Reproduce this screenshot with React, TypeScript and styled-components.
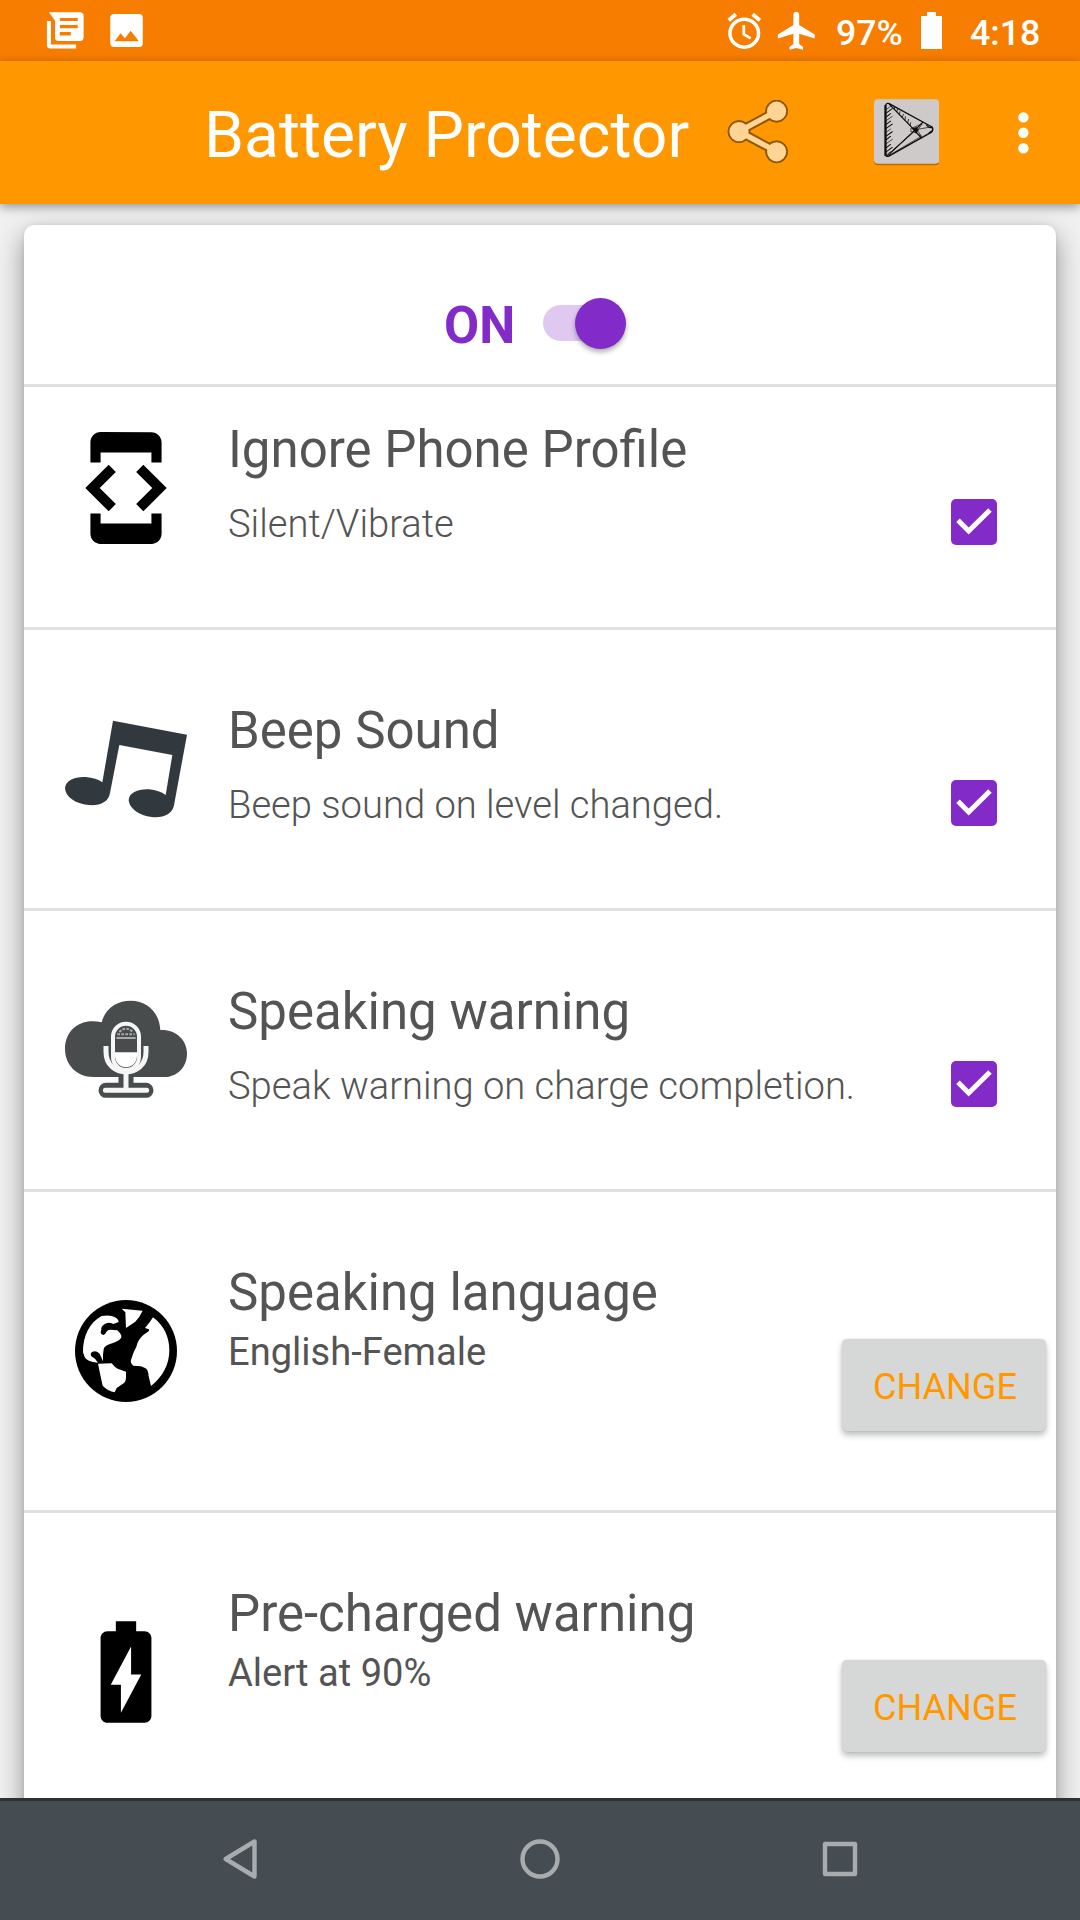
import React from "react";
import styled, { createGlobalStyle } from "styled-components";

const ORANGE = "#ff9800";
const PURPLE = "#832bc8";

const GlobalStyle = createGlobalStyle`
  *, *::before, *::after { box-sizing: border-box; }
  body { margin: 0; background: #eeeeee; }
`;

const Screen = styled.div`
  width: 1080px;
  height: 1920px;
  display: flex;
  flex-direction: column;
  overflow: hidden;
  background: #f0f0f0;
  color: #545454;
  font-family: Roboto, "Liberation Sans", sans-serif;
  svg { display: block; flex: none; }
`;

const StatusBar = styled.header`
  height: 61px;
  flex: none;
  display: flex;
  align-items: center;
  padding: 0 40px 0 44px;
  background: #f77d00;
  color: #fff;
  font-size: 35.7px;
  font-weight: 500;
  line-height: 61px;
`;

const StatusGroup = styled.div<{ $end?: boolean }>`
  display: flex;
  align-items: center;
  height: 61px;
  margin-left: ${(p) => (p.$end ? "auto" : "0")};
`;

const StatusText = styled.span<{ $width: number; $left: number }>`
  width: ${(p) => p.$width}px;
  margin-left: ${(p) => p.$left}px;
  padding-top: 6px;
  white-space: nowrap;
`;

const AppBar = styled.div`
  height: 143px;
  flex: none;
  display: flex;
  align-items: center;
  padding-left: 204px;
  background: ${ORANGE};
  box-shadow: 0 3px 10px rgba(0, 0, 0, 0.38);
  z-index: 2;
`;

const AppTitle = styled.h1`
  margin: 0;
  width: 520px;
  color: #fff;
  font-size: 64.2px;
  font-weight: 400;
  line-height: 75px;
  padding-top: 6px;
  white-space: nowrap;
`;

const BarAction = styled.div<{ $width: number }>`
  width: ${(p) => p.$width}px;
  display: flex;
`;

const Body = styled.main`
  flex: 1;
  min-height: 0;
  padding: 21px 24px 0;
  overflow: hidden;
`;

const Card = styled.section`
  height: 1600px;
  display: flex;
  flex-direction: column;
  background: #fff;
  border-radius: 10px;
  box-shadow: 0 10px 26px rgba(0, 0, 0, 0.4), 0 0 4px rgba(0, 0, 0, 0.08);
`;

const MasterToggle = styled.div`
  height: 162px;
  flex: none;
  display: flex;
  align-items: flex-start;
  padding: 69px 0 0 420px;
  border-bottom: 3px solid #e0e0e0;
`;

const ToggleLabel = styled.span`
  width: 99px;
  color: ${PURPLE};
  font-size: 51px;
  font-weight: 700;
  line-height: 62px;
  padding-top: 1px;
`;

const SwitchTrack = styled.span`
  width: 78px;
  height: 36px;
  margin-top: 11px;
  display: flex;
  align-items: center;
  justify-content: flex-end;
  border-radius: 18px;
  background: #dfc9f1;
`;

const SwitchThumb = styled.span`
  width: 51px;
  height: 51px;
  flex: none;
  margin-right: -5px;
  border-radius: 50%;
  background: ${PURPLE};
  box-shadow: 0 3px 5px rgba(0, 0, 0, 0.32);
`;

const SettingsList = styled.div`
  flex: 1;
  min-height: 0;
  overflow: hidden;
`;

const SettingRow = styled.div<{ $tall?: boolean; $scrolled?: boolean }>`
  height: ${(p) => (p.$tall ? 321 : 281)}px;
  margin-top: ${(p) => (p.$scrolled ? -38 : 0)}px;
  display: flex;
  align-items: flex-start;
  border-bottom: 3px solid #e0e0e0;
`;

const IconSlot = styled.div`
  width: 204px;
  height: 100%;
  flex: none;
  display: flex;
  align-items: center;
  justify-content: center;
`;

const RowText = styled.div`
  flex: 1;
  padding-top: 71px;
  white-space: nowrap;
`;

const RowTitle = styled.h2`
  margin: 0;
  font-size: 51px;
  font-weight: 400;
  line-height: 60px;
`;

const Description = styled.p`
  margin: 22px 0 0;
  font-size: 38.15px;
  font-weight: 300;
  line-height: 45px;
`;

const CurrentValue = styled.p`
  margin: 7px 0 0;
  font-size: 38.1px;
  line-height: 45px;
`;

const CheckBox = styled.span`
  width: 46px;
  height: 46px;
  flex: none;
  margin: 150px 59px 0 0;
  border-radius: 5px;
  background: ${PURPLE};
`;

const ChangeButton = styled.button`
  width: 204px;
  height: 92px;
  flex: none;
  margin: 147px 10px 0 0;
  padding: 5px 0 0 2px;
  border: 0;
  border-radius: 5px;
  background: #d6d8d7;
  color: ${ORANGE};
  font: 400 36.1px/87px Roboto, "Liberation Sans", sans-serif;
  box-shadow: 0 4px 6px rgba(0, 0, 0, 0.26), 0 0 2px rgba(0, 0, 0, 0.12);
`;

const NavBar = styled.nav`
  height: 122px;
  flex: none;
  display: flex;
  align-items: center;
  justify-content: center;
  gap: 252px;
  padding-bottom: 3px;
  border-top: 3px solid #2b3233;
  background: #454d52;
  z-index: 3;
`;

const NavIcon = ({ children }: { children: React.ReactNode }) => (
  <svg width="48" height="48" viewBox="0 0 48 48" fill="none" stroke="#a8acae" strokeWidth="4.4" strokeLinejoin="round">
    {children}
  </svg>
);

const LibraryIcon = () => (
  <svg width="44" height="43" viewBox="0 0 44 44" fill="#fff" preserveAspectRatio="none">
    <path
      fillRule="evenodd"
      d="M5 3.2h31q3.6 0 3.6 3.6v22.4q0 3.6-3.6 3.6H14.6q-3.6 0-3.6-3.6V12zM15.8 9.1v3.3h18V9.1zm0 7.3v3.3h18v-3.3zm0 7.2v3.5h11v-3.5z"
    />
    <path d="M2.9 12.4h4v24h25.2v4H6.5q-3.6 0-3.6-3.6z" />
  </svg>
);

const PhotoSvg = styled.svg`
  margin-left: 22px;
`;

const ImageIcon = () => (
  <PhotoSvg width="33.5" height="33" viewBox="0 0 34 34" fill="#fff">
    <path fillRule="evenodd" d="M4 0h26q3.5 0 3.5 3.8v26.4q0 3.8-3.5 3.8H4q-4 0-4-3.8V3.8Q0 0 4 0zM4.5 28.2H29.5L21 17.2l-5.8 7.7-4.6-5z" />
  </PhotoSvg>
);

const AlarmIcon = () => (
  <svg width="34.5" height="37.6" viewBox="0 0 36 40" fill="none" stroke="#fff" preserveAspectRatio="none">
    <circle cx="18" cy="22.5" r="14.9" strokeWidth="3.7" />
    <path d="M1.8 8.8 9.2 2.4M34.2 8.8 26.8 2.4" strokeWidth="4" />
    <path d="M17.5 14v9.7l7.2 4.4" strokeWidth="2.9" />
  </svg>
);

const PlaneSvg = styled.svg`
  margin-left: 12.5px;
`;

const PlaneIcon = () => (
  <PlaneSvg width="46.5" height="45.6" viewBox="0 0 24 24" fill="#fff" preserveAspectRatio="none">
    <path d="M21 16v-2l-8-5V3.5c0-.83-.67-1.5-1.5-1.5S10 2.67 10 3.5V9l-8 5v2l8-2.5V19l-2 1.5V22l3.5-1 3.5 1v-1.5L13 19v-5.5l8 2.5z" />
  </PlaneSvg>
);

const BatteryIcon = () => (
  <svg width="21" height="37" viewBox="0 0 21 37" fill="#fff">
    <path d="M6 0h9v4h6v33H0V4h6z" />
  </svg>
);

const ShareIcon = () => (
  <svg width="64" height="66" viewBox="0 0 64 66">
    <g fill="#8f5602" stroke="#8f5602">
      <path d="M52.6 11.2 15 31.4l37.6 20.2" fill="none" strokeWidth="9.4" />
      <circle cx="52.6" cy="11.2" r="11" />
      <circle cx="15" cy="31.6" r="11" />
      <circle cx="52.6" cy="51.8" r="11" />
    </g>
    <g fill="#ffd495">
      <path d="M52.6 11.2 15 31.4l37.6 20.2" fill="none" stroke="#ffd495" strokeWidth="5.4" />
      <circle cx="52.6" cy="11.2" r="9.6" />
      <circle cx="15" cy="31.6" r="9.6" />
      <circle cx="52.6" cy="51.8" r="9.6" />
    </g>
  </svg>
);

const hatch = [22, 32, 44, 55, 66, 78, 90, 101, 112, 124, 136, 148, 158];

const SketchPlayIcon = () => (
  <svg width="65.5" height="67.5" viewBox="0 0 190 202" preserveAspectRatio="none">
    <rect x="0" y="5" width="190" height="193" rx="12" fill="#b56c08" />
    <rect x="0" y="1" width="190" height="193" rx="12" fill="#cecac9" />
    <g fill="none" stroke="#0d0d0d" strokeLinecap="round" strokeLinejoin="round">
      <path d="M34 20v146q1 8 9 5l124-72q7-8 0-16L44 14q-8-4-10 6z" strokeWidth="4" />
      <path d="M33 20v148" strokeWidth="6" />
      <path d="M45 16 118 94l19 22M38 171 118 94l23-24" strokeWidth="3.5" />
      <path d="M48 160 106 106M45 168l91-56M56 152l56-50" strokeWidth="1.8" />
      <path d="M108 88l32-14-14 20 12 18-18-12-12-2zM120 92l48-9" strokeWidth="2" />
      <path d="M112 88l12-3 4 10-7 6z" fill="#0d0d0d" strokeWidth="2" />
      <path d="M152 78q8 10 18 8M160 101l10-7" strokeWidth="3" />
      {hatch.map((y, i) => (
        <path key={y} d={`M35 ${y + 10}l${i % 2 ? 18 : 13}-${i % 2 ? 13 : 10}`} strokeWidth={i % 3 ? 3 : 2} />
      ))}
      <path d="M66 38l2-7M74 47l1-9M82 55l3-9M90 63l1-10M98 71l2-10M105 79l1-8M60 31l-1-6" strokeWidth="2.4" />
    </g>
  </svg>
);

const MoreIcon = () => (
  <svg width="12" height="42" viewBox="0 0 12 42" fill="#fff">
    <circle cx="6.4" cy="5.4" r="5.2" />
    <circle cx="6.4" cy="20.8" r="5.2" />
    <circle cx="6.4" cy="36.2" r="5.2" />
  </svg>
);

const DeveloperIcon = () => (
  <svg width="122" height="122" viewBox="0 0 24 24" fill="#000">
    <path d="M7 5h10v2h2V3c0-1.1-.9-1.99-2-1.99L7 1c-1.1 0-2 .9-2 2v4h2V5zm8.41 11.59L20 12l-4.59-4.59L14 8.83 17.17 12 14 15.17l1.41 1.42zM10 15.17 6.83 12 10 8.83 8.59 7.41 4 12l4.59 4.59L10 15.17zM17 19H7v-2H5v4c0 1.1.9 2 2 2h10c1.1 0 2-.9 2-2v-4h-2v2z" />
  </svg>
);

const MusicIcon = () => (
  <svg width="122" height="122" viewBox="75 54 366 366" fill="#32393e">
    <path d="M219 92 441 134 402 346C397 373 368 385 335 381C298 377 268 356 266 331C267 306 298 296 327 298Q358 301 377 315L397 195 238 165 210 309C206 336 180 348 145 345C106 341 76 321 75 294C77 269 108 259 137 261Q169 264 187 277Z" />
  </svg>
);

const CloudMicIcon = () => (
  <svg width="122" height="122" viewBox="75 27 366 366">
    <path fill="#484c4c" d="M160 291C108 291 75 252 75 207C75 145 127 112 185 127C196 84 232 62 272 62C323 62 358 98 361 150C408 148 441 180 441 221C441 262 410 291 374 291Z" />
    <path d="M258 282v48M198 331h120" fill="none" stroke="#484c4c" strokeWidth="45" strokeLinecap="round" />
    <g fill="none" stroke="#f6f6f6">
      <path d="M198 198v18c0 80 120 80 120 0v-18" strokeWidth="15" />
      <path d="M258 276v54M196 331h124" strokeWidth="15" strokeLinecap="round" />
      <rect x="219" y="131" width="78" height="139" rx="39" strokeWidth="12" />
    </g>
    <path d="M225 217h66v9c0 48-66 48-66 0z" fill="#fff" />
    <g fill="none" stroke="#a9abab" strokeWidth="6">
      <path d="M229 174h58" />
      <path d="M232 163h52M238 156q20-20 40 0" strokeDasharray="8 4" />
    </g>
  </svg>
);

const GlobeIcon = () => (
  <svg width="122" height="122" viewBox="75 30 366 366">
    <circle cx="258" cy="213" r="153" fill="#000" />
    <g fill="#fff">
      <path d="M245 86 308 92Q300 110 286 125L258 144 256 97Z" />
      <path d="M339 112C373 137 388 173 388 211C388 254 368 291 333 318L326 289Q325 268 315 264L303 259 280 257Q270 249 273 240L280 219 289 200Q294 178 310 165L327 153 327 148 315 144Q330 127 339 112Z" />
      <path d="M129 217C128 169 149 126 185 108Q211 103 225 112Q236 118 236 126L220 132Q204 124 193 133Q182 141 184 150Q178 162 190 165Q196 164 199 156Q204 148 212 149L232 151Q248 166 243 174Q239 183 210 192Q193 197 191 208L189 224V244L179 221Q168 211 158 215Q149 219 154 229L165 236 174 248Q140 245 134 231Z" />
      <path d="M174 251 215 250Q224 262 233 266L258 275V291Q258 305 251 310L230 324 224 337Q204 333 193 322L188 317 183 295Z" />
    </g>
  </svg>
);

const ChargingIcon = () => (
  <svg width="122" height="122" viewBox="0 0 24 24" fill="#000">
    <path d="M15.67 4H14V2h-4v2H8.33C7.6 4 7 4.6 7 5.33v15.33C7 21.4 7.6 22 8.33 22h7.33c.74 0 1.34-.6 1.34-1.33V5.33C17 4.6 16.4 4 15.67 4zM11 20v-5.5H9L13 7v5.5h2L11 20z" />
  </svg>
);

const Checked = () => (
  <CheckBox role="checkbox" aria-checked="true">
    <svg width="46" height="46" viewBox="0 0 138 138" fill="none" stroke="#fff" strokeWidth="15">
      <path d="M21 64 53 96 117 33" />
    </svg>
  </CheckBox>
);

export default function App() {
  return (
    <>
      <GlobalStyle />
      <Screen>
        <StatusBar>
          <StatusGroup>
            <LibraryIcon />
            <ImageIcon />
          </StatusGroup>
          <StatusGroup $end>
            <AlarmIcon />
            <PlaneIcon />
            <StatusText $left={16} $width={85}>97%</StatusText>
            <BatteryIcon />
            <StatusText $left={28} $width={70}>4:18</StatusText>
          </StatusGroup>
        </StatusBar>
        <AppBar>
          <AppTitle>Battery Protector</AppTitle>
          <BarAction $width={149.5}><ShareIcon /></BarAction>
          <BarAction $width={143.5}><SketchPlayIcon /></BarAction>
          <BarAction $width={12}><MoreIcon /></BarAction>
        </AppBar>
        <Body>
          <Card>
            <MasterToggle>
              <ToggleLabel>ON</ToggleLabel>
              <SwitchTrack role="switch" aria-checked="true"><SwitchThumb /></SwitchTrack>
            </MasterToggle>
            <SettingsList>
              <SettingRow $scrolled>
                <IconSlot><DeveloperIcon /></IconSlot>
                <RowText>
                  <RowTitle>Ignore Phone Profile</RowTitle>
                  <Description>Silent/Vibrate</Description>
                </RowText>
                <Checked />
              </SettingRow>
              <SettingRow>
                <IconSlot><MusicIcon /></IconSlot>
                <RowText>
                  <RowTitle>Beep Sound</RowTitle>
                  <Description>Beep sound on level changed.</Description>
                </RowText>
                <Checked />
              </SettingRow>
              <SettingRow>
                <IconSlot><CloudMicIcon /></IconSlot>
                <RowText>
                  <RowTitle>Speaking warning</RowTitle>
                  <Description>Speak warning on charge completion.</Description>
                </RowText>
                <Checked />
              </SettingRow>
              <SettingRow $tall>
                <IconSlot><GlobeIcon /></IconSlot>
                <RowText>
                  <RowTitle>Speaking language</RowTitle>
                  <CurrentValue>English-Female</CurrentValue>
                </RowText>
                <ChangeButton>CHANGE</ChangeButton>
              </SettingRow>
              <SettingRow $tall>
                <IconSlot><ChargingIcon /></IconSlot>
                <RowText>
                  <RowTitle>Pre-charged warning</RowTitle>
                  <CurrentValue>Alert at 90%</CurrentValue>
                </RowText>
                <ChangeButton>CHANGE</ChangeButton>
              </SettingRow>
            </SettingsList>
          </Card>
        </Body>
        <NavBar>
          <NavIcon><path d="M38.5 6.5v35L9.7 24z" /></NavIcon>
          <NavIcon><circle cx="24" cy="24" r="17.5" /></NavIcon>
          <NavIcon><rect x="9" y="9" width="30" height="30" /></NavIcon>
        </NavBar>
      </Screen>
    </>
  );
}
